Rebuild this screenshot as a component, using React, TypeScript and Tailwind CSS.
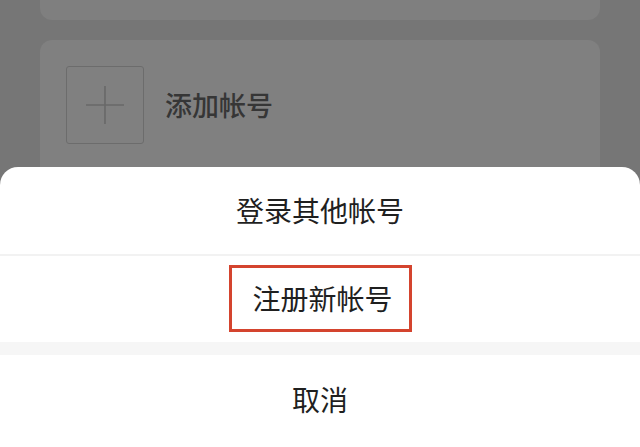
import React from 'react';

const ACTIONS = ['登录其他帐号', '注册新帐号'];

export default function App() {
  return (
    <div className="relative w-[640px] h-[447px] overflow-hidden bg-[#767676] font-['Noto_Sans_CJK_SC',sans-serif]">
      {/* Dimmed account list behind the sheet */}
      <div className="flex flex-col gap-5 px-10">
        <div className="-mt-10 h-[60px] rounded-xl bg-[#7f7f7f]" />
        <div className="h-[200px] rounded-xl bg-[#808080] pl-[26px] pt-[26px]">
          <div className="flex items-center">
            <div className="flex h-[78px] w-[78px] items-center justify-center rounded-[3px] border border-[#6c6c6c]">
              <svg width="40" height="40" viewBox="0 0 40 40" fill="none" stroke="#686868" strokeWidth="1.6">
                <path d="M20 1v38M1 20h38" />
              </svg>
            </div>
            <span className="ml-[21px] pb-[2px] text-[27px] font-medium leading-none text-[#363636]">添加帐号</span>
          </div>
        </div>
      </div>

      {/* Action sheet */}
      <div className="absolute inset-x-0 bottom-0 top-[167px] flex flex-col rounded-t-[18px] bg-white">
        <div className="flex h-[87px] items-center justify-center pb-[2px] text-[28px] leading-none text-[#1f1f1f]">
          {ACTIONS[0]}
        </div>
        <div className="h-[2px] bg-[#f2f2f2]" />
        <div className="flex h-[86px] items-center justify-center pb-[2px]">
          <div className="flex h-[67px] w-[183px] items-center justify-center border-[3px] border-[#d4442e] pb-[1px] pl-[5px] text-[28px] leading-none text-[#1f1f1f]">
            {ACTIONS[1]}
          </div>
        </div>
        <div className="h-[13px] bg-[#f6f6f6]" />
        <div className="flex flex-1 items-center justify-center pb-[4px] text-[28px] leading-none text-[#1f1f1f]">
          取消
        </div>
      </div>
    </div>
  );
}
